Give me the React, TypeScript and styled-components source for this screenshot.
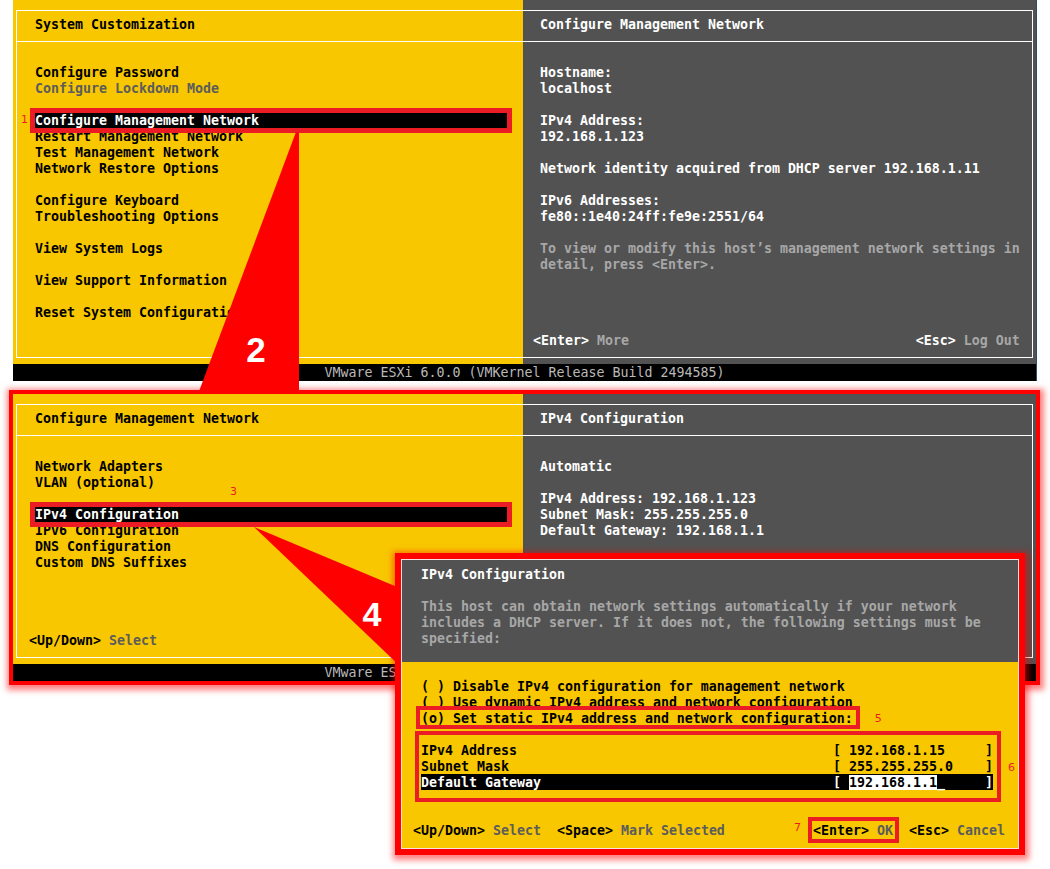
import React from 'react'
import styled, { createGlobalStyle, css } from 'styled-components'

const YELLOW = '#f8c700'
const SLATE = '#525252'
const MARK = '#ec1c24'
const FLARE = '#ff0000'

const GlobalStyle = createGlobalStyle`
  html, body {
    margin: 0;
    padding: 0;
    background: #ffffff;
  }
`

// rows are 16px tall; the taller line box drops the glyphs 1px inside each row
const Page = styled.main`
  position: relative;
  width: 1050px;
  height: 869px;
  box-sizing: border-box;
  padding-left: 13px;
  overflow: hidden;
  background: #ffffff;
  font-family: "DejaVu Sans Mono", "Liberation Mono", monospace;
  font-size: 13.29px;
  font-weight: bold;
  line-height: 18px;
`

const Screen = styled.section<{ $flare?: boolean }>`
  width: 1023px;
  display: flex;
  flex-direction: column;
  ${p =>
    p.$flare
      ? css`
          margin-top: 13px;
          box-shadow: 0 0 0 4px ${FLARE}, 1px 2px 6px 7px rgba(255, 0, 0, 0.5);
        `
      : css`
          box-shadow: 1px 0 0 #2b4c72;
        `}
`

const Panes = styled.div`
  padding: 10px 3px 6px;
  background: linear-gradient(to right, ${YELLOW} 0 510px, ${SLATE} 510px 100%);
`

const Frame = styled.div<{ $body: number }>`
  display: grid;
  grid-template-columns: 506px 1fr;
  grid-template-rows: 31px ${p => p.$body}px;
  border: 1px solid #ffffff;
`

const Heading = styled.div<{ $dark?: boolean }>`
  box-sizing: border-box;
  padding: 5px 0 0 ${p => (p.$dark ? 17 : 18)}px;
  border-bottom: 1px solid #ffffff;
  color: ${p => (p.$dark ? '#ffffff' : '#000000')};
  white-space: pre;
`

const Pane = styled.div<{ $dark?: boolean }>`
  display: flex;
  flex-direction: column;
  padding: ${p => (p.$dark ? '22px 13px 9px 17px' : '22px 15px 9px 18px')};
  color: ${p => (p.$dark ? '#ffffff' : '#000000')};
`

const Line = styled.div<{ $dim?: boolean; $dark?: boolean }>`
  height: 16px;
  white-space: pre;
  ${p =>
    p.$dim &&
    css`
      color: ${p.$dark ? '#a7a7a7' : '#5c5c5c'};
    `}
`

// highlighted menu entry, boxed in red
const Pick = styled.div`
  position: relative;
  height: 16px;
  background: #000000;
  color: #ffffff;
  white-space: pre;
  &::after {
    content: '';
    position: absolute;
    inset: -4px -4px -5px -5px;
    border: 5px solid ${MARK};
  }
`

const Tag = styled.span<{ $x: string; $y: string }>`
  position: absolute;
  left: ${p => p.$x};
  top: ${p => p.$y};
  z-index: 1;
  font-family: "DejaVu Sans", "Liberation Sans", sans-serif;
  font-size: 11px;
  font-weight: normal;
  line-height: 14px;
  color: ${MARK};
`

const KeyBar = styled.div<{ $pull: number }>`
  display: flex;
  justify-content: space-between;
  margin-top: auto;
  margin-left: ${p => p.$pull}px;
  height: 16px;
  white-space: pre;
`

const Hint = styled.span<{ $dark?: boolean }>`
  color: ${p => (p.$dark ? '#a7a7a7' : '#5c5c5c')};
`

const StatusBar = styled.div`
  height: 17px;
  line-height: 18px;
  background: #000000;
  color: #b9b9b9;
  font-weight: normal;
  text-align: center;
  white-space: pre;
`

const Dialog = styled.div`
  position: absolute;
  left: 401px;
  top: 559px;
  z-index: 3;
  width: 618px;
  height: 290px;
  box-sizing: border-box;
  display: flex;
  flex-direction: column;
  border: 1px solid #f4e2e2;
  box-shadow: 0 0 0 6px ${FLARE}, 1px 2px 6px 9px rgba(255, 0, 0, 0.5);
`

const DialogHead = styled.div`
  padding: 6px 0 16px 19px;
  background: ${SLATE};
  color: #ffffff;
`

const DialogBody = styled.div`
  flex: 1;
  display: flex;
  flex-direction: column;
  padding: 16px 25px 10px 19px;
  background: ${YELLOW};
  color: #000000;
`

const Marker = styled.div<{ $inset: string; $inline?: boolean }>`
  position: relative;
  display: ${p => (p.$inline ? 'inline-block' : 'block')};
  height: 16px;
  vertical-align: top;
  &::after {
    content: '';
    position: absolute;
    inset: ${p => p.$inset};
    border: 4px solid ${MARK};
    pointer-events: none;
  }
`

const Fields = styled(Marker)`
  height: auto;
  margin-top: 16px;
`

const FieldRow = styled.div<{ $active?: boolean }>`
  display: flex;
  justify-content: space-between;
  height: 16px;
  white-space: pre;
  ${p =>
    p.$active &&
    css`
      background: #000000;
      color: #ffffff;
    `}
`

const Entry = styled.span`
  background: #ffffff;
  color: #000000;
`

const DialogKeys = styled(KeyBar)`
  margin-right: -12px;
`

const Overlay = styled.svg`
  position: absolute;
  left: 0;
  top: 0;
  z-index: 2;
  pointer-events: none;
`

type Entry = string | { text: string; dim?: boolean; pick?: boolean; tag?: [string, string, string] }

function Lines({ items, dark }: { items: Entry[]; dark?: boolean }) {
  return (
    <>
      {items.map((e, i) => {
        const item = typeof e === 'string' ? { text: e } : e
        if ('pick' in item && item.pick) {
          return (
            <Pick key={i}>
              {item.text}
              {item.tag && (
                <Tag $x={item.tag[1]} $y={item.tag[2]}>
                  {item.tag[0]}
                </Tag>
              )}
            </Pick>
          )
        }
        return (
          <Line key={i} $dim={'dim' in item && item.dim} $dark={dark}>
            {item.text}
          </Line>
        )
      })}
    </>
  )
}

const mainMenu: Entry[] = [
  'Configure Password',
  { text: 'Configure Lockdown Mode', dim: true },
  '',
  { text: 'Configure Management Network', pick: true, tag: ['1', '-14px', '1px'] },
  'Restart Management Network',
  'Test Management Network',
  'Network Restore Options',
  '',
  'Configure Keyboard',
  'Troubleshooting Options',
  '',
  'View System Logs',
  '',
  'View Support Information',
  '',
  'Reset System Configuration',
]

const hostInfo: Entry[] = [
  'Hostname:',
  'localhost',
  '',
  'IPv4 Address:',
  '192.168.1.123',
  '',
  'Network identity acquired from DHCP server 192.168.1.11',
  '',
  'IPv6 Addresses:',
  'fe80::1e40:24ff:fe9e:2551/64',
  '',
  { text: 'To view or modify this host\u2019s management network settings in', dim: true },
  { text: 'detail, press <Enter>.', dim: true },
]

const networkMenu: Entry[] = [
  'Network Adapters',
  'VLAN (optional)',
  '',
  { text: 'IPv4 Configuration', pick: true, tag: ['3', '195px', '-21px'] },
  'IPv6 Configuration',
  'DNS Configuration',
  'Custom DNS Suffixes',
]

const ipv4Info: Entry[] = [
  'Automatic',
  '',
  'IPv4 Address: 192.168.1.123',
  'Subnet Mask: 255.255.255.0',
  'Default Gateway: 192.168.1.1',
]

const BUILD = 'VMware ESXi 6.0.0 (VMKernel Release Build 2494585)'

export default function App() {
  return (
    <Page>
      <GlobalStyle />

      <Screen>
        <Panes>
          <Frame $body={315}>
            <Heading>System Customization</Heading>
            <Heading $dark>Configure Management Network</Heading>
            <Pane>
              <Lines items={mainMenu} />
            </Pane>
            <Pane $dark>
              <Lines items={hostInfo} dark />
              <KeyBar $pull={-7}>
                <span>
                  {'<Enter> '}
                  <Hint $dark>More</Hint>
                </span>
                <span>
                  {'<Esc> '}
                  <Hint $dark>Log Out</Hint>
                </span>
              </KeyBar>
            </Pane>
          </Frame>
        </Panes>
        <StatusBar>{BUILD}</StatusBar>
      </Screen>

      <Screen $flare>
        <Panes>
          <Frame $body={221}>
            <Heading>Configure Management Network</Heading>
            <Heading $dark>IPv4 Configuration</Heading>
            <Pane>
              <Lines items={networkMenu} />
              <KeyBar $pull={-6}>
                <span>
                  {'<Up/Down> '}
                  <Hint>Select</Hint>
                </span>
              </KeyBar>
            </Pane>
            <Pane $dark>
              <Lines items={ipv4Info} dark />
            </Pane>
          </Frame>
        </Panes>
        <StatusBar>{BUILD}</StatusBar>
      </Screen>

      <Overlay width={1050} height={869} viewBox="0 0 1050 869">
        <polygon points="296,132 299,132 299,394 198,394" fill="#fe0000" />
        <polygon points="254,527 402,589 402,668" fill="#fe0000" />
        <text x={256} y={362} fill="#ffffff" fontSize={35} textAnchor="middle" fontFamily="Liberation Sans, Arial, sans-serif">
          2
        </text>
        <text x={372} y={626} fill="#ffffff" fontSize={34} textAnchor="middle" fontFamily="Liberation Sans, Arial, sans-serif">
          4
        </text>
      </Overlay>

      <Dialog>
        <DialogHead>
          <Line>IPv4 Configuration</Line>
          <Line />
          <Line $dim $dark>This host can obtain network settings automatically if your network</Line>
          <Line $dim $dark>includes a DHCP server. If it does not, the following settings must be</Line>
          <Line $dim $dark>specified:</Line>
        </DialogHead>
        <DialogBody>
          <Line>( ) Disable IPv4 configuration for management network</Line>
          <Line>( ) Use dynamic IPv4 address and network configuration</Line>
          <Line>
            <Marker $inline $inset="-4px -7px -3px -5px">
              (o) Set static IPv4 address and network configuration:
              <Tag $x="calc(100% + 22px)" $y="2px">5</Tag>
            </Marker>
          </Line>
          <Fields $inset="-11px -8px -12px -6px">
            <FieldRow>
              <span>IPv4 Address</span>
              <span>{'[ ' + '192.168.1.15'.padEnd(17) + ']'}</span>
            </FieldRow>
            <FieldRow>
              <span>Subnet Mask</span>
              <span>{'[ ' + '255.255.255.0'.padEnd(17) + ']'}</span>
            </FieldRow>
            <FieldRow $active>
              <span>Default Gateway</span>
              <span>
                {'[ '}
                <Entry>192.168.1.1</Entry>
                {'_     ]'}
              </span>
            </FieldRow>
            <Tag $x="calc(100% + 15px)" $y="19px">6</Tag>
          </Fields>
          <DialogKeys $pull={-8}>
            <span>
              {'<Up/Down> '}
              <Hint>Select</Hint>
              {'  <Space> '}
              <Hint>Mark Selected</Hint>
            </span>
            <span>
              <Marker $inline $inset="-5px -6px -5px -5px">
                {'<Enter> '}
                <Hint>OK</Hint>
                <Tag $x="-19px" $y="-1px">7</Tag>
              </Marker>
              {'  <Esc> '}
              <Hint>Cancel</Hint>
            </span>
          </DialogKeys>
        </DialogBody>
      </Dialog>
    </Page>
  )
}
